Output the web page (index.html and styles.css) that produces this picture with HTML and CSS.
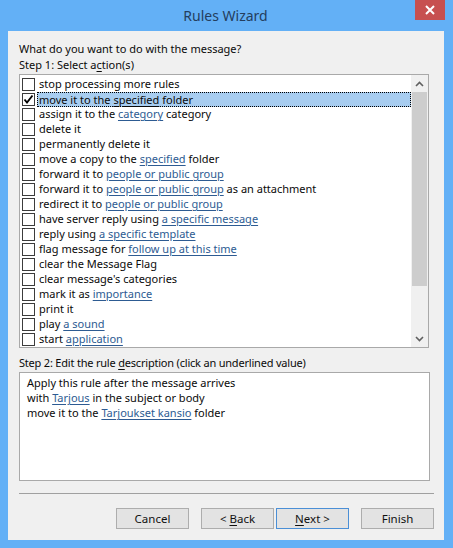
FILE: index.html
```html
<!DOCTYPE html>
<html>
<head>
<meta charset="utf-8">
<link rel="stylesheet" href="styles.css">
</head>
<body>
<div class="window">
  <div class="titlebar">
    <span class="title">Rules Wizard</span>
    <div class="close"><svg width="10" height="10" viewBox="0 0 10 10"><path d="M1 1 L9 9 M9 1 L1 9" stroke="#fff" stroke-width="2"/></svg></div>
  </div>
  <div class="client">
    <div class="line">What do you want to do with the message?</div>
    <div class="line">Step 1: Select a<u>c</u>tion(s)</div>
    <div class="list">
      <div class="rows">
        <div class="row"><span class="cb"></span><span class="txt">stop processing more rules</span></div>
        <div class="row"><span class="cb"><svg width="11" height="11" viewBox="0 0 11 11"><path d="M1.5 5.5 L4 8.5 L9.5 1.5" fill="none" stroke="#000" stroke-width="1.9"/></svg></span><span class="txt sel">move it to the <u>specified</u> folder</span></div>
        <div class="row"><span class="cb"></span><span class="txt">assign it to the <a>category</a> category</span></div>
        <div class="row"><span class="cb"></span><span class="txt">delete it</span></div>
        <div class="row"><span class="cb"></span><span class="txt">permanently delete it</span></div>
        <div class="row"><span class="cb"></span><span class="txt">move a copy to the <a>specified</a> folder</span></div>
        <div class="row"><span class="cb"></span><span class="txt">forward it to <a>people or public group</a></span></div>
        <div class="row"><span class="cb"></span><span class="txt">forward it to <a>people or public group</a> as an attachment</span></div>
        <div class="row"><span class="cb"></span><span class="txt">redirect it to <a>people or public group</a></span></div>
        <div class="row"><span class="cb"></span><span class="txt">have server reply using <a>a specific message</a></span></div>
        <div class="row"><span class="cb"></span><span class="txt">reply using <a>a specific template</a></span></div>
        <div class="row"><span class="cb"></span><span class="txt">flag message for <a>follow up at this time</a></span></div>
        <div class="row"><span class="cb"></span><span class="txt">clear the Message Flag</span></div>
        <div class="row"><span class="cb"></span><span class="txt">clear message's categories</span></div>
        <div class="row"><span class="cb"></span><span class="txt">mark it as <a>importance</a></span></div>
        <div class="row"><span class="cb"></span><span class="txt">print it</span></div>
        <div class="row"><span class="cb"></span><span class="txt">play <a>a sound</a></span></div>
        <div class="row"><span class="cb"></span><span class="txt">start <a>application</a></span></div>
      </div>
      <div class="scrollbar">
        <div class="arrow"><svg width="9" height="6" viewBox="0 0 9 6"><path d="M1 5 L4.5 1.5 L8 5" fill="none" stroke="#606060" stroke-width="1.6"/></svg></div>
        <div class="thumb"></div>
        <div class="track"></div>
        <div class="arrow"><svg width="9" height="6" viewBox="0 0 9 6"><path d="M1 1 L4.5 4.5 L8 1" fill="none" stroke="#606060" stroke-width="1.6"/></svg></div>
      </div>
    </div>
    <div class="line step2">Step 2: Edit the rule <u>d</u>escription (click an underlined value)</div>
    <div class="desc">
      <div>Apply this rule after the message arrives</div>
      <div>with <a>Tarjous</a> in the subject or body</div>
      <div>move it to the <a>Tarjoukset kansio</a> folder</div>
    </div>
    <div class="sep"></div>
    <div class="buttons">
      <button class="btn">Cancel</button>
      <div class="pair">
        <button class="btn">&lt; <u>B</u>ack</button>
        <button class="btn default"><u>N</u>ext &gt;</button>
      </div>
      <button class="btn">Finish</button>
    </div>
  </div>
</div>
</body>
</html>
```
FILE: styles.css
```css
html, body {
  margin: 0;
  padding: 0;
}
body {
  font-family: "Noto Sans", "Open Sans", sans-serif;
  font-size: 11px;
  color: #0a0a0a;
}
.window {
  width: 453px;
  height: 548px;
  box-sizing: border-box;
  background: #63b0f6;
  padding: 0 9px 8px 8px;
  display: flex;
  flex-direction: column;
}
.titlebar {
  height: 31px;
  position: relative;
  display: flex;
  align-items: center;
  justify-content: center;
}
.title {
  font-family: "Noto Sans", sans-serif;
  font-size: 14px;
  color: #243e5e;
  margin-top: -1px;
  padding-right: 1px;
}
.close {
  position: absolute;
  top: 0;
  right: -1px;
  width: 30px;
  height: 20px;
  background: #c75050;
  display: flex;
  align-items: center;
  justify-content: center;
}
.client {
  flex: 1;
  background: #f0f0f0;
  padding: 10px 10px 0 11px;
  display: flex;
  flex-direction: column;
}
.line {
  height: 16px;
  line-height: 16px;
  white-space: nowrap;
}
u {
  text-decoration: underline;
  text-underline-offset: 2px;
}
a {
  color: #2d5b92;
  text-decoration: underline;
  text-underline-offset: 2px;
}
.list {
  margin-top: 1px;
  width: 410px;
  height: 274px;
  box-sizing: border-box;
  border: 1px solid #a9a9a9;
  background: #fff;
  display: flex;
}
.rows {
  flex: 1;
  padding-top: 2px;
  display: flex;
  flex-direction: column;
}
.row {
  height: 15px;
  display: flex;
  align-items: center;
}
.cb {
  width: 13px;
  height: 13px;
  box-sizing: border-box;
  border: 1px solid #3c3c3c;
  margin-left: 2px;
  background: #fff;
  display: flex;
  align-items: center;
  justify-content: center;
}
.txt {
  flex: 1;
  height: 15px;
  line-height: 14px;
  box-sizing: border-box;
  margin-left: 2px;
  padding: 0 2px;
  white-space: nowrap;
}
.txt.sel {
  background: #a8cdf0;
  border: 1px dotted #000;
  line-height: 13px;
  padding: 0 1px;
}
.scrollbar {
  width: 17px;
  background: #f0f0f0;
  display: flex;
  flex-direction: column;
}
.arrow {
  height: 17px;
  display: flex;
  align-items: center;
  justify-content: center;
}
.thumb {
  height: 194px;
  background: #cdcdcd;
  margin: 0 1px;
}
.track {
  flex: 1;
}
.step2 {
  margin-top: 7px;
  letter-spacing: -0.2px;
}
.desc {
  margin-top: 1px;
  width: 411px;
  height: 109px;
  box-sizing: border-box;
  border: 1px solid #a9a9a9;
  background: #fff;
  padding: 2px 0 0 7px;
  line-height: 15px;
}
.sep {
  margin-top: 12px;
  height: 1px;
  background: #a0a0a0;
}
.buttons {
  margin-top: 14px;
  display: flex;
  justify-content: flex-end;
  gap: 12px;
}
.pair {
  display: flex;
  gap: 2px;
}
.btn {
  width: 73px;
  height: 21px;
  box-sizing: border-box;
  border: 1px solid #adadad;
  background: #e3e3e3;
  font-family: "Noto Sans", "Open Sans", sans-serif;
  font-size: 11.5px;
  color: #111;
  padding: 0;
  margin: 0;
}
.btn.default {
  border-color: #4b8fd6;
}
```
